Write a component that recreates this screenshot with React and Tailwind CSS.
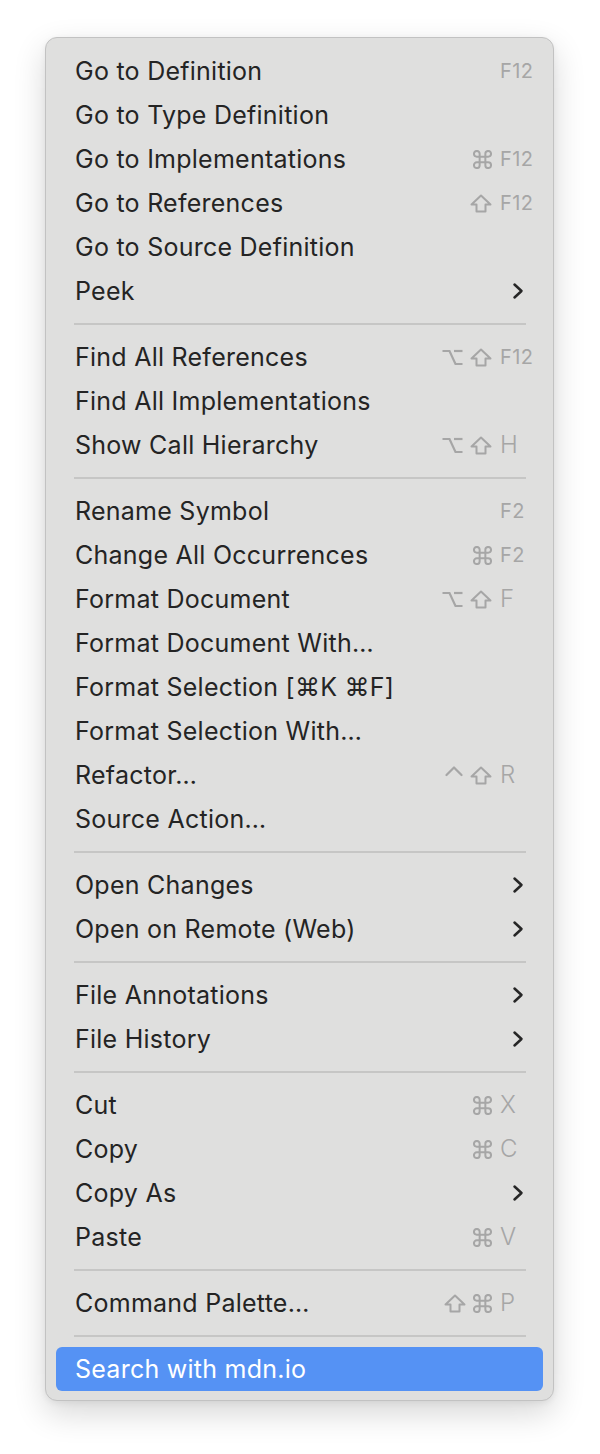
import React from "react";

const ICON = "#a6a6a6";

function Cmd() {
  return (
    <svg width="19" height="19" viewBox="2 2 20 20" fill="none" stroke={ICON} strokeWidth="2.1" strokeLinecap="round" strokeLinejoin="round">
      <path d="M15 6v12a3 3 0 1 0 3-3H6a3 3 0 1 0 3 3V6a3 3 0 1 0-3 3h12a3 3 0 1 0-3-3" />
    </svg>
  );
}
function Shift() {
  return (
    <svg width="22" height="19" viewBox="0 0 22 19" fill="none" stroke={ICON} strokeWidth="2" strokeLinejoin="round">
      <path d="M11 1.5 L20.5 10.5 H15.5 V17.5 H6.5 V10.5 H1.5 Z" />
    </svg>
  );
}
function Opt() {
  return (
    <svg width="21" height="17" viewBox="0 0 21 17" fill="none" stroke={ICON} strokeWidth="2.2" strokeLinecap="butt">
      <path d="M0.5 2 H7.5 L13.5 15 H20.5" />
      <path d="M12 2 H20.5" />
    </svg>
  );
}
function Ctrl() {
  return (
    <svg width="18" height="19" viewBox="0 0 18 19" fill="none" stroke={ICON} strokeWidth="2.2" strokeLinecap="round" strokeLinejoin="round">
      <polyline points="1.5,9 9,1.5 16.5,9" />
    </svg>
  );
}
function Chevron() {
  return (
    <svg width="12" height="18" viewBox="0 0 12 18" fill="none" stroke="#262626" strokeWidth="2.5" strokeLinecap="round" strokeLinejoin="round">
      <polyline points="2.5,2.5 9.5,9 2.5,15.5" />
    </svg>
  );
}

const MOD = { cmd: Cmd, shift: Shift, opt: Opt, ctrl: Ctrl };

const groups = [
  [
    { t: "Go to Definition", k: "F12", m: [] },
    { t: "Go to Type Definition" },
    { t: "Go to Implementations", k: "F12", m: ["cmd"] },
    { t: "Go to References", k: "F12", m: ["shift"] },
    { t: "Go to Source Definition" },
    { t: "Peek", sub: true },
  ],
  [
    { t: "Find All References", k: "F12", m: ["opt", "shift"] },
    { t: "Find All Implementations" },
    { t: "Show Call Hierarchy", k: "H", m: ["opt", "shift"] },
  ],
  [
    { t: "Rename Symbol", k: "F2", m: [] },
    { t: "Change All Occurrences", k: "F2", m: ["cmd"] },
    { t: "Format Document", k: "F", m: ["opt", "shift"] },
    { t: "Format Document With…" },
    { t: "Format Selection [⌘K ⌘F]" },
    { t: "Format Selection With…" },
    { t: "Refactor…", k: "R", m: ["ctrl", "shift"] },
    { t: "Source Action…" },
  ],
  [
    { t: "Open Changes", sub: true },
    { t: "Open on Remote (Web)", sub: true },
  ],
  [
    { t: "File Annotations", sub: true },
    { t: "File History", sub: true },
  ],
  [
    { t: "Cut", k: "X", m: ["cmd"] },
    { t: "Copy", k: "C", m: ["cmd"] },
    { t: "Copy As", sub: true },
    { t: "Paste", k: "V", m: ["cmd"] },
  ],
  [{ t: "Command Palette…", k: "P", m: ["shift", "cmd"] }],
  [{ t: "Search with mdn.io", active: true }],
];

function Row({ item }) {
  const fkey = item.k && item.k.length > 1;
  return (
    <div
      className={
        "flex h-[44px] items-center mx-[10px] rounded-[6px] pl-[19px] " +
        (item.active ? "bg-[#5592f4] text-white" : "text-[#242424]")
      }
    >
      <span className="flex-1 text-[25px] leading-none tracking-[0.25px] whitespace-nowrap">{item.t}</span>
      {item.sub && (
        <span className="mr-[19px] flex items-center">
          <Chevron />
        </span>
      )}
      {item.k && (
        <span className="flex items-center mr-[9px]">
          <span className="flex items-center gap-[7px]">
            {item.m.map((m, i) => {
              const C = MOD[m];
              return <C key={i} />;
            })}
          </span>
          <span
            className={
              "ml-[8px] w-[34px] leading-none text-[#a6a6a6] text-left " +
              (fkey ? "text-[20px] tracking-[0.4px]" : "text-[24px] font-light tracking-[0.3px]")
            }
          >
            {item.k}
          </span>
        </span>
      )}
    </div>
  );
}

export default function App() {
  return (
    <div className="min-h-[1454px] bg-white pt-[37px] pl-[45px]" style={{ fontFamily: 'Inter, "Noto Sans", "DejaVu Sans", sans-serif' }}>
      <div className="w-[509px] rounded-[12px] border border-[#c2c2c2] bg-[#dfdfde] pt-[11px] pb-[9px] shadow-[0_12px_32px_rgba(0,0,0,0.16),0_2px_6px_rgba(0,0,0,0.06)]">
        {groups.map((g, gi) => (
          <React.Fragment key={gi}>
            {gi > 0 && (
              <div className="flex h-[22px] items-center">
                <div className="ml-[28px] mr-[27px] h-[2px] flex-1 bg-[#c6c6c5]" />
              </div>
            )}
            {g.map((item, i) => (
              <Row key={i} item={item} />
            ))}
          </React.Fragment>
        ))}
      </div>
    </div>
  );
}
